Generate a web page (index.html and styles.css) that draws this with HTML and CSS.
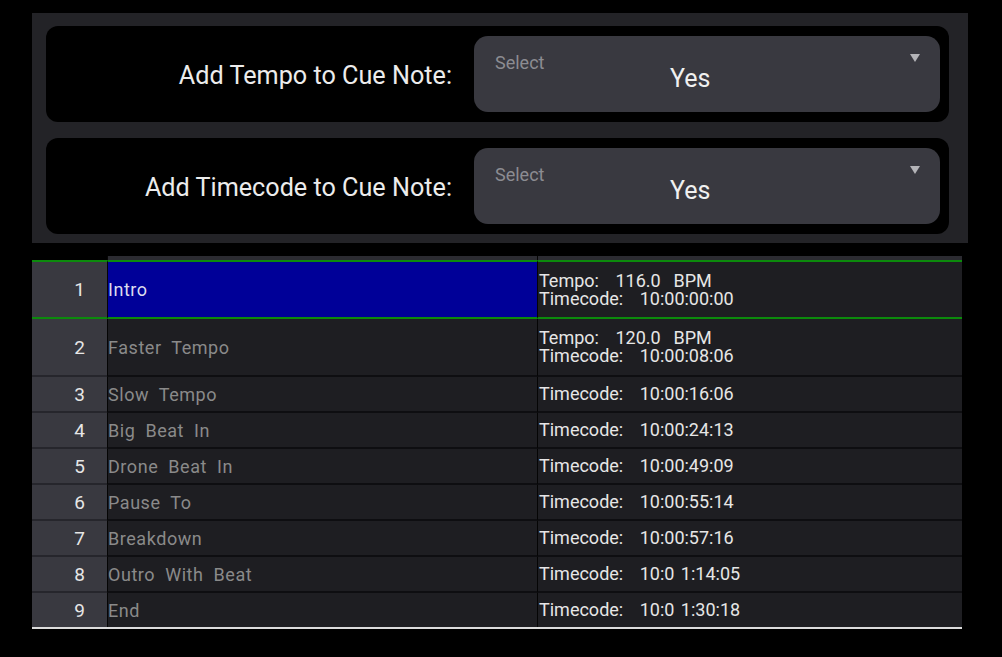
FILE: index.html
```html
<!DOCTYPE html>
<html>
<head>
<meta charset="utf-8">
<link rel="stylesheet" href="styles.css">
</head>
<body>
<section class="panel">
  <div class="card">
    <div class="label">Add Tempo to Cue Note:</div>
    <div class="select">
      <div class="sel-label">Select</div>
      <div class="sel-value">Yes</div>
      <svg class="caret" width="10" height="8" viewBox="0 0 10 8"><path d="M0 0H10L5 8Z" fill="#b4b4b8"/></svg>
    </div>
  </div>
  <div class="card">
    <div class="label">Add Timecode to Cue Note:</div>
    <div class="select">
      <div class="sel-label">Select</div>
      <div class="sel-value">Yes</div>
      <svg class="caret" width="10" height="8" viewBox="0 0 10 8"><path d="M0 0H10L5 8Z" fill="#b4b4b8"/></svg>
    </div>
  </div>
</section>

<section class="table">
  <div class="row head"><div class="c-num"></div><div class="c-name"></div><div class="c-val"></div></div>
  <div class="row sel two"><div class="c-num">1</div><div class="c-name">Intro</div><div class="c-val"><div class="ln"><span class="k">Tempo:</span> 116.0  BPM</div><div class="ln"><span class="k">Timecode:</span> 10:00:00:00</div></div></div>
  <div class="row two"><div class="c-num">2</div><div class="c-name">Faster  Tempo</div><div class="c-val"><div class="ln"><span class="k">Tempo:</span> 120.0  BPM</div><div class="ln"><span class="k">Timecode:</span> 10:00:08:06</div></div></div>
  <div class="row"><div class="c-num">3</div><div class="c-name">Slow  Tempo</div><div class="c-val"><div class="ln"><span class="k">Timecode:</span> 10:00:16:06</div></div></div>
  <div class="row"><div class="c-num">4</div><div class="c-name">Big  Beat  In</div><div class="c-val"><div class="ln"><span class="k">Timecode:</span> 10:00:24:13</div></div></div>
  <div class="row"><div class="c-num">5</div><div class="c-name">Drone  Beat  In</div><div class="c-val"><div class="ln"><span class="k">Timecode:</span> 10:00:49:09</div></div></div>
  <div class="row"><div class="c-num">6</div><div class="c-name">Pause  To</div><div class="c-val"><div class="ln"><span class="k">Timecode:</span> 10:00:55:14</div></div></div>
  <div class="row"><div class="c-num">7</div><div class="c-name">Breakdown</div><div class="c-val"><div class="ln"><span class="k">Timecode:</span> 10:00:57:16</div></div></div>
  <div class="row"><div class="c-num">8</div><div class="c-name">Outro  With  Beat</div><div class="c-val"><div class="ln"><span class="k">Timecode:</span> 10:0 1:14:05</div></div></div>
  <div class="row last"><div class="c-num">9</div><div class="c-name">End</div><div class="c-val"><div class="ln"><span class="k">Timecode:</span> 10:0 1:30:18</div></div></div>
</section>
</body>
</html>
```
FILE: styles.css
```css
html, body {
  margin: 0;
  padding: 0;
  background: #000;
}
body {
  font-family: Roboto, "Liberation Sans", sans-serif;
  width: 1002px;
  height: 657px;
  overflow: hidden;
}
.panel {
  margin: 13px 0 0 32px;
  width: 936px;
  box-sizing: border-box;
  background: #232327;
  padding: 13px 19px 9px 14px;
  display: flex;
  flex-direction: column;
  gap: 16px;
}
.card {
  height: 96px;
  box-sizing: border-box;
  background: #000;
  border-radius: 12px;
  padding: 10px 9px 10px 0;
  display: flex;
  align-items: stretch;
  gap: 22px;
}
.label {
  flex: 0 0 406px;
  text-align: right;
  color: #ececec;
  font-size: 25.2px;
  align-self: center;
  padding-top: 3px;
}
.select {
  flex: 1;
  background: #393940;
  border-radius: 14px;
  padding: 17px 20px 0 21px;
  display: flex;
  flex-direction: column;
  position: relative;
}
.sel-label {
  color: #8c8c92;
  font-size: 18px;
  line-height: 20px;
}
.sel-value {
  color: #f0f0f0;
  font-size: 25px;
  line-height: 25px;
  margin-top: -7px;
  padding-left: 175px;
}
.caret {
  position: absolute;
  right: 20px;
  top: 18px;
}
.table {
  margin: 13px 0 0 32px;
  width: 930px;
  border-bottom: 2px solid #dcdcdc;
}
.row {
  display: grid;
  grid-template-columns: 75px 430px 1fr;
  height: 36px;
}
.row > div {
  display: flex;
  align-items: center;
  box-sizing: border-box;
  white-space: pre;
}
.row.two { height: 58px; }
.row.head { height: 4px; }
.row.head .c-num { background: #000; border: 0; }
.row.head .c-name, .row.head .c-val { background: #2b2b31; border-bottom: 0; }
.c-num {
  background: #393940;
  justify-content: flex-end;
  padding-right: 22px;
  color: #e6e6e6;
  font-size: 19px;
  border-bottom: 2px solid #26262c;
}
.c-name {
  background: #1e1e22;
  border-left: 1px solid #050505;
  border-bottom: 2px solid #0e0e11;
  color: #8a8a8a;
  font-size: 18px;
  letter-spacing: 0.55px;
  word-spacing: 0;
}
.row > .c-val {
  background: #1e1e22;
  border-left: 1px solid #050505;
  border-bottom: 2px solid #0e0e11;
  color: #e6e6e6;
  font-size: 18px;
  padding-left: 1px;
  flex-direction: column;
  align-items: flex-start;
  justify-content: center;
  word-spacing: 2px;
}
.ln {
  line-height: 18px;
  height: 18px;
}
.k {
  margin-right: 10px;
  word-spacing: 0;
}
.row.sel { height: 59px; }
.row.sel > div {
  border-top: 2px solid #0c8a0c;
  border-bottom: 2px solid #0c8a0c;
}
.row.sel .c-name {
  background: #000098;
  color: #dcdcee;
}
.row.last > div { border-bottom: 0; height: 34px; }
.row.last { height: 34px; }
```
